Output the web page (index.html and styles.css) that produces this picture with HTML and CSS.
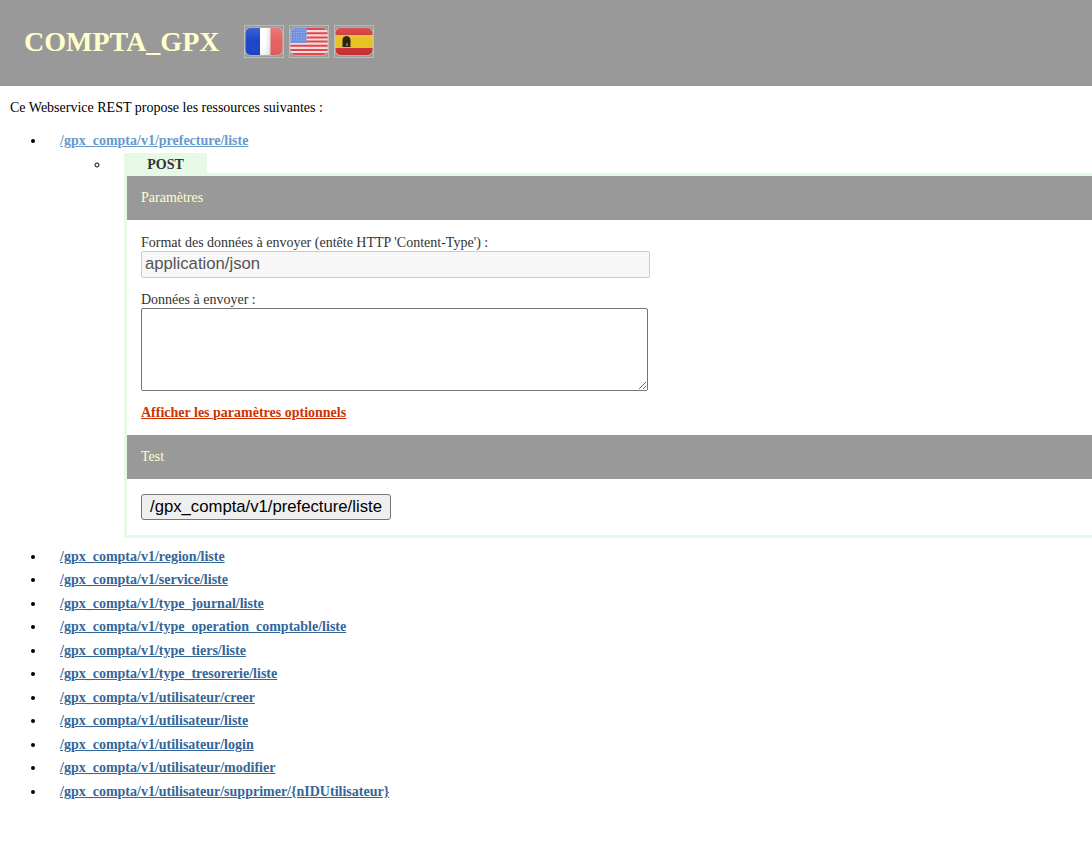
FILE: index.html
```html
<!DOCTYPE html>
<html lang="fr">
<head>
<meta charset="utf-8">
<title>COMPTA_GPX</title>
<link rel="stylesheet" href="styles.css">
</head>
<body>
<header class="top">
  <h1 class="brand">COMPTA_GPX</h1>
  <div class="flags">
    <a class="flag" href="#"><svg viewBox="0 0 38 31" width="38" height="31"><defs><linearGradient id="sh" x1="0" y1="0" x2="0" y2="1"><stop offset="0" stop-color="#fff" stop-opacity=".15"/><stop offset=".5" stop-color="#fff" stop-opacity="0"/><stop offset="1" stop-color="#000" stop-opacity=".06"/></linearGradient><linearGradient id="wh" x1="0" y1="0" x2="1" y2="0"><stop offset="0" stop-color="#fff"/><stop offset=".5" stop-color="#fff"/><stop offset="1" stop-color="#e4e4e4"/></linearGradient><clipPath id="rc"><rect x="0.500" y="2" width="37" height="27" rx="5"/></clipPath><filter id="sf"><feGaussianBlur stdDeviation=".4"/></filter></defs><rect x="0" y="1.500" width="38" height="28" rx="5" fill="#c8c8c8"/><g clip-path="url(#rc)"><g filter="url(#sf)"><rect x="0" y="2" width="15" height="27" fill="#1f44c8"/><rect x="15" y="2" width="10.500" height="27" fill="url(#wh)"/><rect x="25.500" y="2" width="12.500" height="27" fill="#e66060"/></g><rect x="0" y="2" width="38" height="27" fill="url(#sh)"/></g></svg></a>
    <a class="flag" href="#"><svg viewBox="0 0 38 31" width="38" height="31"><rect x="0" y="1.500" width="38" height="28" rx="5" fill="#c8c8c8"/><g clip-path="url(#rc)"><g filter="url(#sf)"><rect x="0" y="2" width="38" height="27" fill="#f8dcdc"/><path d="M0 3h38M0 7.200h38M0 11.400h38M0 15.600h38M0 19.800h38M0 24h38M0 28h38" stroke="#e2444c" stroke-width="2"/><rect x="0" y="2" width="16.500" height="15" fill="#6f8fdc"/><path d="M1 4h16M1 6.500h16M1 9h16M1 11.500h16M1 14h16" stroke="#a9bcec" stroke-width="1" stroke-dasharray="1 1.500"/></g></g></svg></a>
    <a class="flag" href="#"><svg viewBox="0 0 38 31" width="38" height="31"><rect x="0" y="1.500" width="38" height="28" rx="5" fill="#c8c8c8"/><g clip-path="url(#rc)"><g filter="url(#sf)"><rect x="0" y="2" width="38" height="27" fill="#cf3036"/><rect x="0" y="9" width="38" height="13" fill="#e7c222"/><path d="M7.500 21v-7c0-2.500 2-4 4-4s4 1.500 4 4v7z" fill="#2a2018"/><rect x="11" y="17" width="2" height="3" fill="#8a6a22"/></g><rect x="0" y="2" width="38" height="27" fill="url(#sh)"/></g></svg></a>
  </div>
</header>
<main class="content">
  <p class="intro">Ce Webservice REST propose les ressources suivantes :</p>
  <ul class="resources">
    <li>
      <a class="res res-open" href="#">/gpx_compta/v1/prefecture/liste</a>
      <ul class="methods">
        <li>
          <div class="verb">POST</div>
          <div class="panel">
            <div class="band">Paramètres</div>
            <div class="body params">
              <label class="field-label">Format des données à envoyer (entête HTTP 'Content-Type') :</label>
              <input class="ctype" type="text" value="application/json" disabled>
              <label class="field-label data-label">Données à envoyer :</label>
              <textarea class="data"></textarea>
              <a class="optional" href="#">Afficher les paramètres optionnels</a>
            </div>
            <div class="band">Test</div>
            <div class="body test">
              <button class="send" type="button">/gpx_compta/v1/prefecture/liste</button>
            </div>
          </div>
        </li>
      </ul>
    </li>
    <li><a class="res" href="#">/gpx_compta/v1/region/liste</a></li>
    <li><a class="res" href="#">/gpx_compta/v1/service/liste</a></li>
    <li><a class="res" href="#">/gpx_compta/v1/type_journal/liste</a></li>
    <li><a class="res" href="#">/gpx_compta/v1/type_operation_comptable/liste</a></li>
    <li><a class="res" href="#">/gpx_compta/v1/type_tiers/liste</a></li>
    <li><a class="res" href="#">/gpx_compta/v1/type_tresorerie/liste</a></li>
    <li><a class="res" href="#">/gpx_compta/v1/utilisateur/creer</a></li>
    <li><a class="res" href="#">/gpx_compta/v1/utilisateur/liste</a></li>
    <li><a class="res" href="#">/gpx_compta/v1/utilisateur/login</a></li>
    <li><a class="res" href="#">/gpx_compta/v1/utilisateur/modifier</a></li>
    <li><a class="res" href="#">/gpx_compta/v1/utilisateur/supprimer/{nIDUtilisateur}</a></li>
  </ul>
</main>
</body>
</html>
```
FILE: styles.css
```css
* { box-sizing: border-box; }
html, body { margin: 0; padding: 0; }
body {
  font-family: "Liberation Serif", "Times New Roman", serif;
  font-size: 14px;
  line-height: 16px;
  color: #000;
  background: #fff;
  overflow-x: hidden;
}
.top {
  display: flex;
  align-items: center;
  height: 86px;
  padding: 0 0 3px 24px;
  background: #999;
}
.brand {
  margin: 0;
  font-size: 28px;
  line-height: 32px;
  font-weight: bold;
  color: #ffc;
}
.flags { display: flex; gap: 5px; margin-left: 25px; }
.flag {
  display: block;
  width: 40px;
  height: 33px;
  border: 1px solid #bbb;
}
.flag svg { display: block; }
.content { padding: 14px 0 0 10px; }
.intro { margin: 0; line-height: 16px; }
.resources {
  list-style: disc;
  margin: 17px 0 0;
  padding: 0 0 0 36px;
}
.resources > li { min-height: 16px; margin-bottom: 7.500px; padding-left: 14px; }
.resources > li:first-child { margin-bottom: 10.750px; }
.res { font-weight: bold; color: #369; }
.res-open { color: #69c; }
.methods {
  list-style: circle;
  margin: 4px 0 0;
  padding: 0 0 0 50px;
}
.methods > li { padding-left: 14px; }
.verb {
  width: 83px;
  height: 20px;
  padding-top: 4px;
  background: #e6f9e6;
  color: #333;
  font-weight: bold;
  text-align: center;
}
.panel {
  margin-right: -30px;
  width: calc(100vw - 114px);
  border: 3px solid #e6f9e6;
  color: #333;
}
.band {
  height: 44px;
  padding: 14px;
  background: #999;
  color: #ffc;
}
.body { padding: 0 14px; }
.params { padding-top: 15px; padding-bottom: 14px; }
.field-label { display: block; }
.ctype {
  display: block;
  width: 509px;
  height: 27px;
  margin: 0;
  padding: 0 3px 2px;
  border: 1px solid #ccc;
  border-radius: 2px;
  background: #f7f7f7;
  color: #555;
  font-family: "Liberation Sans", Arial, sans-serif;
  font-size: 16.700px;
}
.data-label { margin-top: 13px; line-height: 17px; height: 16px; }
.data {
  display: block;
  width: 507px;
  height: 83px;
  margin: 1px 0 0;
  padding: 2px;
  border: 1px solid #767676;
  border-radius: 2px;
  background: #fff;
}
.optional {
  display: block;
  margin-top: 14px;
  font-weight: bold;
  color: #c30;
}
.test { padding-top: 15px; padding-bottom: 15px; }
.send {
  display: block;
  width: 250px;
  height: 26px;
  padding: 0;
  border: 1px solid #767676;
  border-radius: 3px;
  background: #efefef;
  color: #000;
  font-family: "Liberation Sans", Arial, sans-serif;
  font-size: 16.700px;
}
```
